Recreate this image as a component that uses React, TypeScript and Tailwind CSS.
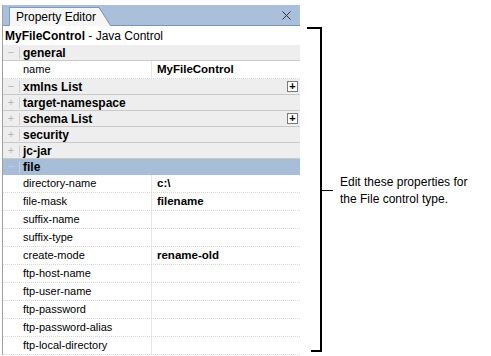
import React from 'react'

type Row =
  | { kind: 'group'; label: string; open: boolean; plus?: boolean; active?: boolean }
  | { kind: 'prop'; name: string; value?: string }

const rows: Row[] = [
  { kind: 'group', label: 'general', open: true },
  { kind: 'prop', name: 'name', value: 'MyFileControl' },
  { kind: 'group', label: 'xmlns List', open: true, plus: true },
  { kind: 'group', label: 'target-namespace', open: false },
  { kind: 'group', label: 'schema List', open: false, plus: true },
  { kind: 'group', label: 'security', open: false },
  { kind: 'group', label: 'jc-jar', open: false },
  { kind: 'group', label: 'file', open: true, active: true },
  { kind: 'prop', name: 'directory-name', value: 'c:\\' },
  { kind: 'prop', name: 'file-mask', value: 'filename' },
  { kind: 'prop', name: 'suffix-name' },
  { kind: 'prop', name: 'suffix-type' },
  { kind: 'prop', name: 'create-mode', value: 'rename-old' },
  { kind: 'prop', name: 'ftp-host-name' },
  { kind: 'prop', name: 'ftp-user-name' },
  { kind: 'prop', name: 'ftp-password' },
  { kind: 'prop', name: 'ftp-password-alias' },
  { kind: 'prop', name: 'ftp-local-directory' }
]

function GroupRow({ label, open, plus, active }: { label: string; open: boolean; plus?: boolean; active?: boolean }) {
  return (
    <div
      className={`flex items-center h-[16px] border-b ${
        active ? 'bg-[#a7bdd8] border-[#a7bdd8]' : 'bg-[#eeeeee] border-[#c9c9c9]'
      }`}
    >
      <div className={`w-[16px] text-center text-[11px] leading-none ${active ? 'text-[#c3d2e4]' : 'text-[#b4b4b4]'}`}>
        {open ? '−' : '+'}
      </div>
      <div className={`w-px h-[12px] ${active ? 'bg-[#c3d2e4]' : 'bg-[#cfcfcf]'}`} />
      <div className="ml-[3px] flex-1 text-[12px] font-bold text-black leading-none">{label}</div>
      {plus && (
        <div className="mr-[2px] w-[11px] h-[11px] border border-[#7a7a7a] bg-white flex items-center justify-center text-[11px] font-bold leading-none text-black">
          +
        </div>
      )}
    </div>
  )
}

function PropRow({ name, value }: { name: string; value?: string }) {
  return (
    <div className="flex h-[18px] border-b border-dotted border-[#d6d6d6] bg-white">
      <div className="w-[148px] pl-[20px] flex items-center text-[11px] text-black">{name}</div>
      <div className="w-px bg-[#e6e6e6]" />
      <div className="flex-1 pl-[5px] flex items-center text-[11.5px] font-bold text-black">{value}</div>
    </div>
  )
}

export default function App() {
  return (
    <div className="w-[491px] h-[356px] bg-white flex items-start overflow-hidden font-['Liberation_Sans',Arial,sans-serif]">
      <div className="mt-[5px] ml-[2px] w-[298px] border-l border-[#a0a0a0]">
        <div className="flex h-[21px] bg-[#a9bfda]">
          <div className="w-[6px] border-b border-[#7896bb]" />
          <div className="flex items-end">
            <div className="h-[19px] pl-[6px] pr-[2px] bg-[#f6f6f6] border-l border-t border-[#7f9cbf] text-[12px] text-black flex items-center">
              Property Editor
            </div>
            <svg width="13" height="19" viewBox="0 0 13 19" className="block">
              <polygon points="0,0.5 1,0.5 12.5,18 12.5,19 0,19" fill="#f6f6f6" />
              <polyline points="0,0.5 1,0.5 12.5,18.5 13,18.5" fill="none" stroke="#6f8fb6" strokeWidth="1" />
            </svg>
          </div>
          <div className="flex-1 border-b border-[#7896bb] flex items-center justify-end pr-[9px]">
            <svg width="9" height="9" viewBox="0 0 9 9">
              <path d="M0.5 0.5 L8.5 8.5 M8.5 0.5 L0.5 8.5" stroke="#333" strokeWidth="1" />
            </svg>
          </div>
        </div>
        <div className="h-[19px] flex items-center pl-[2px] text-[12px] text-black bg-white">
          <span className="font-bold">MyFileControl</span>
          <span className="whitespace-pre"> - Java Control</span>
        </div>
        {rows.map((r, i) =>
          r.kind === 'group' ? (
            <GroupRow key={i} label={r.label} open={r.open} plus={r.plus} active={r.active} />
          ) : (
            <PropRow key={i} name={r.name} value={r.value} />
          )
        )}
      </div>

      <div className="ml-[7px] mt-[27px] flex items-start">
        <div className="w-[13px] h-[325px] flex flex-col justify-between">
          <div className="h-[2px] bg-black" />
          <div className="h-[2px] w-[9px] self-end bg-black" />
        </div>
        <div className="w-[2px] h-[325px] bg-black" />
        <div className="mt-[163px] w-[11px] h-[1px] bg-black" />
        <div className="ml-[7px] mt-[147px] text-[12px] leading-[17px] text-black">
          Edit these properties for
          <br />
          the File control type.
        </div>
      </div>
    </div>
  )
}
